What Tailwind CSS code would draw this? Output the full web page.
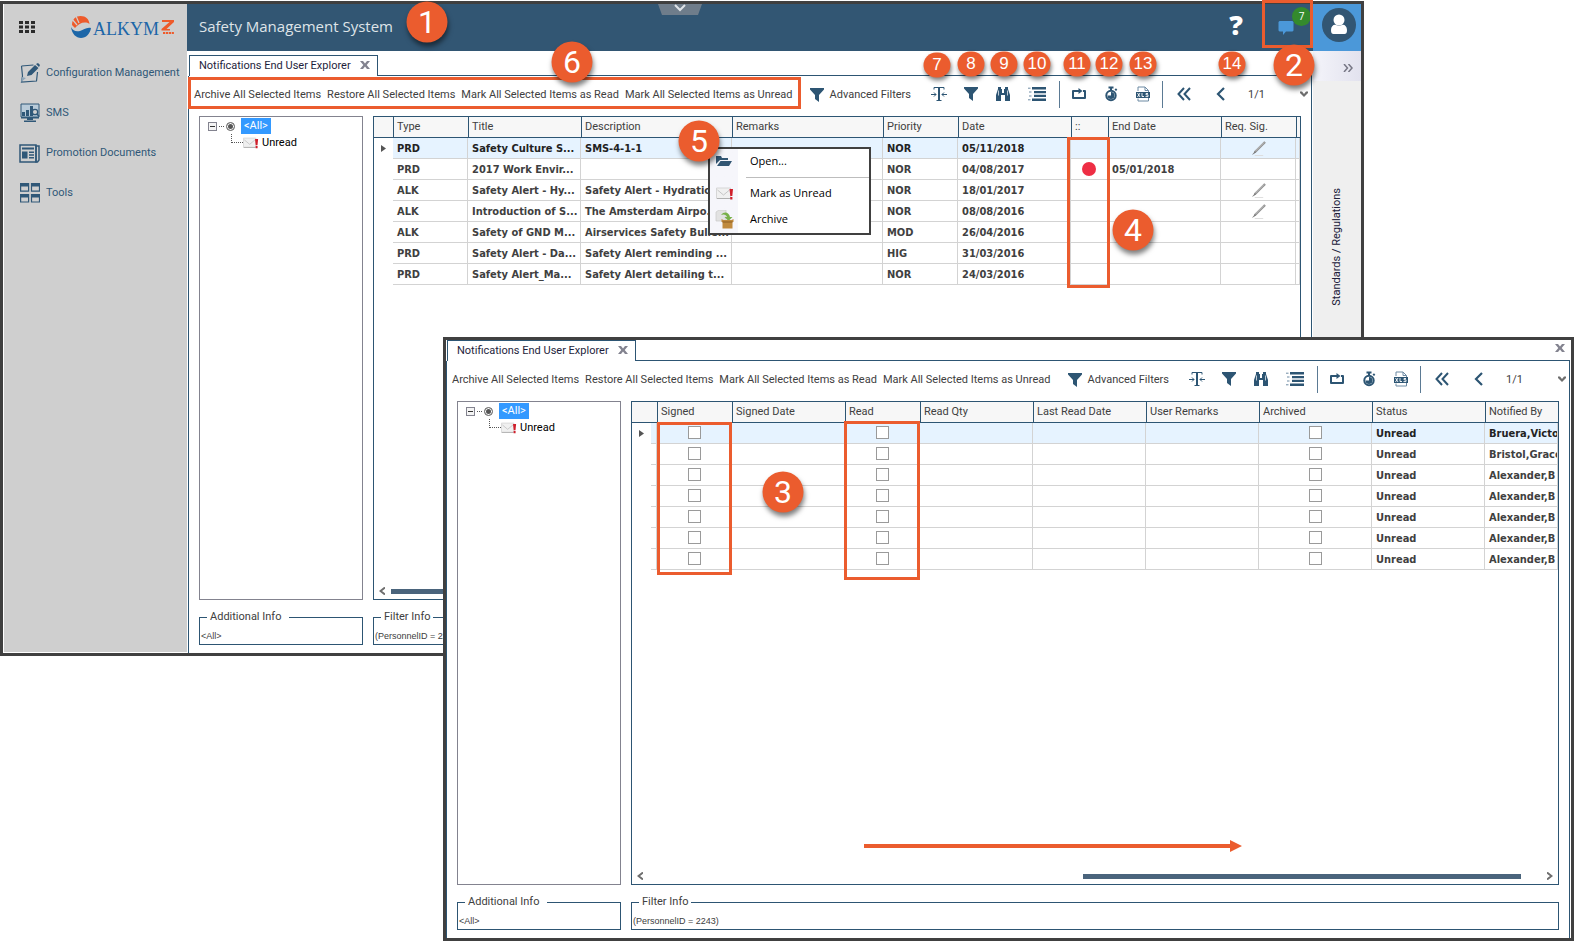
<!DOCTYPE html>
<html lang="en">
<head>
    <meta charset="UTF-8">
    <meta name="viewport" content="width=device-width, initial-scale=1.0">
    <title>Safety Management System</title>
    <script src="https://cdn.jsdelivr.net/npm/@tailwindcss/browser@4"></script>
    <style>
        body { font-family: Roboto, 'Noto Sans', sans-serif; }
    </style>
</head>
<body class="relative min-h-screen overflow-hidden bg-white text-[11px] leading-4 text-[#404040]">

    <!-- Shared icons -->
    <svg class="hidden">
        <symbol id="i-funnel" viewBox="0 0 14 14"><path d="M0 0h14v1.500L9 7v7l-4-3V7L0 1.500z" fill="currentColor"/></symbol>
        <symbol id="i-fit" viewBox="0 0 16 16"><path d="M3 3.500V1.500h3M10 1.500h3v2M5.500 14.500h5M0 8.500h5M3 6.500l2 2-2 2M16 8.500h-5M13 6.500l-2 2 2 2" fill="none" stroke="currentColor" stroke-width="1"/><path d="M6 1h4v1H9v12H7V2H6z" fill="currentColor"/></symbol>
        <symbol id="i-find" viewBox="0 0 16 16"><path d="M3 1h3v2h1v4h2V3h1V1h3v2l2 6v6h-5V9H6v6H1V9l2-6z" fill="currentColor"/><path d="M3.500 4.500v5M12.500 4.500v5" stroke="#fff" stroke-width="0.700" fill="none"/></symbol>
        <symbol id="i-list" viewBox="0 0 18 14"><path d="M4 0h14v2.500H4zM6 4h12v2.300H6zM6 7.700h12V10H6zM4 11.500h14V14H4z" fill="currentColor"/><path d="M0 1.200h2.500M1 5h2.500M1 9h2.500M0 12.800h2.500" stroke="#6d8aa3"/></symbol>
        <symbol id="i-refresh" viewBox="0 0 16 16"><path d="M5.500 5H2v7h12V5h-2" fill="none" stroke="currentColor" stroke-width="2" stroke-linejoin="round"/><path d="M5 5h3" stroke="currentColor" stroke-width="2"/><path d="M7.500 2l4 3-4 3z" fill="currentColor"/></symbol>
        <symbol id="i-timer" viewBox="0 0 16 16"><circle cx="8" cy="9.500" r="4.700" fill="none" stroke="currentColor" stroke-width="2"/><path d="M5.500.500h5v2h-5zM7 2h2v3H7zM11.500 3.500l1.500-1.200 1.300 1.500-1.300 1.200zM8 9.500V6a3.500 3.500 0 1 1-3.500 3.500z" fill="currentColor"/></symbol>
        <symbol id="i-xls" viewBox="0 0 16 16"><path d="M3 5V1h7l3.500 3.500V15H3v-2.500M10 1v3.500h3.500" fill="none" stroke="#6d8aa3"/><path d="M1 6h14v6H1z" fill="currentColor"/><path d="M2.500 7l2.500 4M5 7l-2.500 4M7 7v3.500h2M13 7.500h-2v1.300h2v1.800h-2.500" fill="none" stroke="#fff" stroke-width=".9"/></symbol>
        <symbol id="i-first" viewBox="0 0 16 16"><path d="M8 2L2.500 8 8 14M14 2L8.500 8l5.500 6" fill="none" stroke="currentColor" stroke-width="2"/></symbol>
        <symbol id="i-prev" viewBox="0 0 16 16"><path d="M12 2L6 8l6 6" fill="none" stroke="currentColor" stroke-width="2.200"/></symbol>
        <symbol id="i-down" viewBox="0 0 8 6"><path d="M0 .500h2l2 2.500 2-2.500h2v1.500L4 6 0 2z" fill="currentColor"/></symbol>
        <symbol id="i-left" viewBox="0 0 6 8"><path d="M6 .500L1.500 4 6 7.500" fill="none" stroke="currentColor" stroke-width="2"/></symbol>
        <symbol id="i-close" viewBox="0 0 10 8"><path d="M0 0h3l2 2.500L7 0h3L6.700 4 10 8H7L5 5.500 3 8H0l3.300-4z" fill="#83838f"/></symbol>
        <symbol id="i-mail" viewBox="0 0 18 13"><path d="M.5 1h14v10.500H.5z" fill="#f0f0f0" stroke="#d6d6d6"/><path d="M1.500 3l6 5 6-5" fill="none" stroke="#c6c6c6"/><path d="M1 11.500h13" stroke="#b0b0b0"/><path d="M13.500 2h3.500l-.7 7h-2zM14.200 10h2.200v2.500h-2.200z" fill="#d01f2b"/></symbol>
        <symbol id="i-pen" viewBox="0 0 16 16"><path d="M15 1L4 12" stroke="#8f8f8f" stroke-width="2.400"/><path d="M14 1.500L4 11.500" stroke="#d4d4d4" stroke-width=".8"/><path d="M4.500 10.500L1 15l4-2.500z" fill="#777"/><path d="M4 15.500h9" stroke="#dcdcdc"/></symbol>
    </svg>

    <!-- Main window -->
    <div class="absolute top-px left-0 right-[211px] flex h-[655px] border-[3px] border-[#404040] bg-white">

        <aside class="mb-px ml-px w-[183px] shrink-0 bg-[#cfcfcf] text-[#305878]">
            <div class="flex h-[45px] items-center pl-[15px]">
                <button aria-label="Applications" class="text-[#2b2b2b]">
                    <svg class="h-3 w-4" viewBox="0 0 16 12" fill="currentColor"><path d="M0 0h4v3H0zM6 0h4v3H6zM12 0h4v3h-4zM0 4.500h4v3H0zM6 4.500h4v3H6zM12 4.500h4v3h-4zM0 9h4v3H0zM6 9h4v3H6zM12 9h4v3h-4z"/></svg>
                </button>
                <a href="#" class="ml-9 flex items-center font-['Liberation_Serif'] text-[18px] leading-5 text-[#1c66a8]">
                    <svg class="h-[22px] w-5" viewBox="0 0 20 22"><path d="M1 9C1 3 5 0 9.500 0 15 0 18 3 18.500 8 14 5 8 7 4 12z" fill="#ee5b2b"/><path d="M1 3l5 6M5 0l3 7" stroke="#cfcfcf" stroke-width="1.200"/><path d="M0 11c2 4 5 5 9 4 4-1 6-4 11-3-1 6-5 10-10 10S1 18 0 11z" fill="#1c66a8"/><path d="M8 12c4-3 7-4 11.500-2" stroke="#cfcfcf" stroke-width="1.500" fill="none"/></svg>
                    <span class="mt-1 ml-[2px]">ALKYM</span>
                    <svg class="ml-[2px] h-4 w-[14px]" viewBox="0 0 14 16"><path d="M1 1h12v2L5.500 10H9v1.500H.5V10L8.500 3H1z" fill="#ee5b2b"/><path d="M2 14h11.500" stroke="#ee5b2b" stroke-width="2" stroke-dasharray="2.200 .7"/></svg>
                </a>
            </div>
            <nav class="pt-1">
                <a href="#" class="flex h-10 items-center gap-[6px] pl-4">
                    <svg class="h-5 w-5" viewBox="0 0 20 20"><path d="M1.500 3l12-1M1.500 3l1 10-1 6 15-1 1-9" fill="none" stroke="currentColor" stroke-width="1.200"/><path d="M1 19l5-4-4-1z" fill="#8ea5b8"/><path d="M7 13l1-4 7-7 3.500 3-7 7zM16 1l2-1 2 2-1 2z" fill="currentColor"/></svg>
                    Configuration Management
                </a>
                <a href="#" class="flex h-10 items-center gap-[6px] pl-4">
                    <svg class="h-5 w-5" viewBox="0 0 20 20"><path d="M1 1h18v13H1z" fill="#b9cbd9" stroke="currentColor"/><path d="M2 9h3v4H2zM6 7h3v6H6zM10 3h3v10h-3zM1 14h18v1.500H1zM7 15h6v2H7zM4 17.500h12V19H4z" fill="currentColor"/><circle cx="15" cy="9" r="2.700" fill="#cfcfcf" stroke="currentColor" stroke-width="1.300"/><path d="M17 11l2 2.500" stroke="currentColor" stroke-width="1.500"/></svg>
                    SMS
                </a>
                <a href="#" class="flex h-10 items-center gap-[6px] pl-[15px]">
                    <svg class="h-[19px] w-[21px]" viewBox="0 0 21 19"><path d="M1 1h16v17H1z" fill="none" stroke="currentColor" stroke-width="1.500"/><path d="M17 2h3v14l-1.500 2H17z" fill="none" stroke="currentColor" stroke-width="1.500"/><path d="M3 3.500h12v2H3zM3 7.500h5.500v7H3zM10 7.500h5V9h-5zM10 10.300h5v1.500h-5zM10 13h5v1.500h-5z" fill="currentColor"/></svg>
                    Promotion Documents
                </a>
                <a href="#" class="flex h-10 items-center gap-[6px] pl-4">
                    <svg class="h-5 w-5" viewBox="0 0 20 20"><path d="M.6.600h8v7.500h-8zM11.500.600h8v7.500h-8zM.6 11.500h8V19h-8zM11.500 11.500h8V19h-8z" fill="none" stroke="currentColor" stroke-width="1.200"/><path d="M0 0h9v3.500H0zM11 0h9v3.500h-9zM0 11h9v3.500H0zM11 11h9v3.500h-9z" fill="currentColor"/></svg>
                    Tools
                </a>
            </nav>
        </aside>

        <div class="flex min-w-0 flex-1 flex-col">
            <header class="relative flex h-[47px] shrink-0 items-center bg-[#325673] pl-3">
                <h1 class="pb-1 font-['Open_Sans'] text-[15px] text-[#dfe4e8]">Safety Management System</h1>
                <button aria-label="Collapse header" class="absolute top-0 left-[471px]">
                    <svg class="block h-[11px] w-11" viewBox="0 0 44 11"><path d="M0 0h44l-4 11H4z" fill="#6f7d8b"/><path d="M17 1l5 5 5-5" fill="none" stroke="#dfe4e8" stroke-width="2"/></svg>
                </button>
                <div class="ml-auto flex h-full items-center">
                    <button aria-label="Help" class="w-6 pb-[6px] font-['Open_Sans'] text-[27px] leading-8 font-extrabold text-white">?</button>
                    <button class="relative ml-[30px] h-8 w-[33px]">
                        <svg class="h-4 w-4" viewBox="0 0 16 16"><path d="M1.500 1h13l1 1v8.500l-1 1H8L5 15v-3.500H1.500l-1-1V2z" fill="#4b98d9"/></svg>
                        <span class="absolute -top-[5px] right-0 size-[19px] rounded-full bg-[#348a2d] text-center font-['Open_Sans'] text-[10px] leading-[19px] text-white">7</span>
                    </button>
                    <button aria-label="User" class="ml-[2px] flex h-full w-12 justify-center bg-[#4b98d9] pt-1 pl-[3px]">
                        <svg class="size-[34px]" viewBox="0 0 34 34"><circle cx="17" cy="17" r="17" fill="#325673"/><circle cx="17" cy="12" r="5.500" fill="#fff"/><path d="M9 22c0-4 3-6 5-5 2 1 4 1 6 0 2-1 5 1 5 5 0 3-1 4-2.500 4h-11C10 26 9 25 9 22z" fill="#fff"/></svg>
                    </button>
                </div>
            </header>

            <div class="flex min-h-0 flex-1">
                <section data-grid="first" class="workspace ml-px flex min-w-0 flex-1 flex-col pt-1"></section>
                <aside class="mb-px ml-px flex w-12 flex-col bg-[#efefef] text-[#20203a]">
                    <button aria-label="Expand panel" class="flex h-[30px] items-center justify-end bg-linear-to-r from-[#f4f4fa] to-[#e2e2ee] pt-1 pr-2">
                        <svg class="h-2 w-[10px]" viewBox="0 0 10 8"><path d="M1 0l3.500 4L1 8M5.500 0L9 4 5.500 8" fill="none" stroke="#777785" stroke-width="1.500"/></svg>
                    </button>
                    <span class="mt-[104px] h-[124px] self-center text-center whitespace-nowrap [writing-mode:sideways-lr]">Standards / Regulations</span>
                </aside>
            </div>
        </div>
    </div>

    <!-- Context menu -->
    <ul role="menu" class="absolute top-[147px] left-[708px] h-[88px] w-[163px] border-2 border-[#404040] bg-linear-to-r from-[#f6f6fb] from-[28px] to-white to-[28px] font-['Open_Sans'] text-black">
        <li class="flex h-6 items-center">
            <svg class="ml-[6px] h-3 w-4" viewBox="0 0 16 12"><path d="M0 9V1h5l1 2h6v2H4z" fill="#325673"/><path d="M4.500 6H16l-3 5H1z" fill="#325673"/></svg>
            <button class="ml-[18px]">Open...</button>
        </li>
        <li class="mt-1 mb-[2px] ml-9 border-t border-[#bdbdbd]"></li>
        <li class="flex h-[26px] items-center">
            <svg class="ml-[6px] h-[13px] w-[18px]"><use href="#i-mail"/></svg>
            <button class="ml-4">Mark as Unread</button>
        </li>
        <li class="flex h-[26px] items-center">
            <svg class="ml-[5px] h-[19px] w-[19px]" viewBox="0 0 19 19"><path d="M1 2l3-2h7v11H1z" fill="#e2e2e2" stroke="#c8c8c8" stroke-width=".7"/><path d="M6 5c3-4 8-3 9 2h2.500l-4 4-4-4H12C11 4 8 4 6 5z" fill="#79b04a"/><path d="M6.500 9l2 1h8l2-1v3h-1v6.500h-10V12h-1z" fill="#c08a3e"/><path d="M7.500 12h10" stroke="#8d5f22"/></svg>
            <button class="ml-4">Archive</button>
        </li>
    </ul>

    <!-- Same explorer, scrolled to the right -->
    <div class="absolute top-[337px] right-px bottom-0 left-[443px] flex border-[3px] border-[#404040] bg-white">
        <section data-grid="second" class="workspace mr-px flex min-w-0 flex-1 flex-col"></section>
    </div>

    <!-- Callouts -->
    <div class="absolute top-[77px] left-[188px] h-8 w-[613px] border-[3px] border-[#eb5c2e]"></div>
    <div class="absolute top-[137px] left-[1067px] h-[151px] w-[43px] border-[3px] border-[#eb5c2e]"></div>
    <div class="absolute top-0 left-[1262px] h-12 w-[51px] border-[3px] border-[#eb5c2e]"></div>
    <div class="absolute top-[422px] left-[657px] h-[153px] w-[75px] border-[3px] border-[#eb5c2e]"></div>
    <div class="absolute top-[421px] left-[844px] h-[159px] w-[76px] border-[3px] border-[#eb5c2e]"></div>
    <svg class="absolute top-[840px] left-[864px] h-3 w-[378px]" viewBox="0 0 378 12"><path d="M0 4h366V0l12 6-12 6V8H0z" fill="#eb5c2e"/></svg>
    <div id="callouts"></div>

    <template id="workspace">
        <div class="flex h-[21px] shrink-0">
            <div class="ml-px flex w-[189px] items-center border-x border-t border-[#2d5573] pl-[9px] text-[#1e1e3c]">
                <span>Notifications End User Explorer</span>
                <button aria-label="Close tab" class="mr-[7px] mb-[2px] ml-auto"><svg class="block h-2 w-[10px]"><use href="#i-close"/></svg></button>
            </div>
            <div class="tab-end flex flex-1 justify-end border-b border-[#2d5573] pr-[5px]"></div>
        </div>
        <div class="flex min-h-0 flex-1 flex-col border-x border-[#2d5573] pb-2">
            <div class="flex h-10 shrink-0 items-center pb-[4px] whitespace-nowrap">
                <div class="flex gap-[6px] pt-[2px] pl-[5px]">
                    <button>Archive All Selected Items</button>
                    <button>Restore All Selected Items</button>
                    <button>Mark All Selected Items as Read</button>
                    <button>Mark All Selected Items as Unread</button>
                </div>
                <button class="mr-5 ml-auto flex items-center gap-[6px] pt-[2px]"><svg class="size-[14px] text-[#2d5573]"><use href="#i-funnel"/></svg>Advanced Filters</button>
                <div class="flex h-[27px] w-[380px] text-[#2d5573]">
                    <div class="flex items-center gap-4 pr-[13px]">
                        <button aria-label="Best fit"><svg class="size-4"><use href="#i-fit"/></svg></button>
                        <button aria-label="Filter"><svg class="mx-px size-[14px]"><use href="#i-funnel"/></svg></button>
                        <button aria-label="Find"><svg class="size-4"><use href="#i-find"/></svg></button>
                        <button aria-label="Group" class="pl-px"><svg class="h-[14px] w-[18px]"><use href="#i-list"/></svg></button>
                    </div>
                    <div class="flex items-center gap-4 border-l border-[#5b7a94] pr-[11px] pl-[11px]">
                        <button aria-label="Refresh"><svg class="size-4"><use href="#i-refresh"/></svg></button>
                        <button aria-label="Auto refresh"><svg class="size-4"><use href="#i-timer"/></svg></button>
                        <button aria-label="Export to XLS"><svg class="size-4"><use href="#i-xls"/></svg></button>
                    </div>
                    <div class="flex flex-1 items-center gap-5 border-l border-[#5b7a94] pl-[13px]">
                        <button aria-label="First page"><svg class="size-4"><use href="#i-first"/></svg></button>
                        <button aria-label="Previous page"><svg class="size-4"><use href="#i-prev"/></svg></button>
                        <span class="pt-[2px] text-[#404040]">1/1</span>
                        <button aria-label="More" class="mr-[3px] ml-auto text-[#6e6e6e]"><svg class="h-[6px] w-2"><use href="#i-down"/></svg></button>
                    </div>
                </div>
            </div>
            <div class="flex min-h-0 flex-1 gap-[10px] px-[10px]">
                <div class="flex w-[164px] shrink-0 flex-col">
                    <div class="flex-1 border border-[#83838f] pt-[1px] pl-2">
                        <div class="flex h-4 items-center">
                            <button aria-label="Collapse" class="grid size-[9px] place-items-center border border-[#83838f] bg-[#f4f4f4]"><span class="h-px w-[5px] bg-[#333]"></span></button>
                            <span class="mx-[2px] w-[5px] border-t border-dotted border-[#555]"></span>
                            <label class="flex items-center gap-[6px]">
                                <input type="radio" checked class="size-[9px] appearance-none rounded-full border border-[#777] bg-[#555] shadow-[inset_0_0_0_1px_#fff]">
                                <span class="bg-[#3399ff] px-[3px] text-white">&lt;All&gt;</span>
                            </label>
                        </div>
                        <div class="flex h-[18px] items-center pl-[23px] text-black">
                            <span class="mb-[9px] h-[9px] w-3 border-b border-l border-dotted border-[#555]"></span>
                            <svg class="h-3 w-4"><use href="#i-mail"/></svg>
                            <span class="ml-[3px]">Unread</span>
                        </div>
                    </div>
                    <fieldset class="mt-[9px] h-9 border border-[#2d5573]">
                        <legend class="ml-[7px] pr-2 pl-[3px]">Additional Info</legend>
                        <p class="pl-px font-['Liberation_Sans'] text-[9px] leading-[22px]">&lt;All&gt;</p>
                    </fieldset>
                </div>
                <div class="flex min-w-0 flex-1 flex-col">
                    <div class="flex min-h-0 flex-1 flex-col overflow-hidden border border-[#2d5573]">
                        <table class="w-full table-fixed border-separate border-spacing-0 bg-white whitespace-nowrap"></table>
                        <div class="mt-auto flex h-4 items-center justify-between px-[5px] text-[#6e6e6e]">
                            <button aria-label="Scroll left"><svg class="block h-2 w-[6px]"><use href="#i-left"/></svg></button>
                            <span class="thumb h-[5px] w-[438px] bg-[#4a647c]"></span>
                            <button aria-label="Scroll right"><svg class="block h-2 w-[6px] rotate-180"><use href="#i-left"/></svg></button>
                        </div>
                    </div>
                    <fieldset class="mt-[9px] h-9 border border-[#2d5573]">
                        <legend class="ml-[7px] px-[3px]">Filter Info</legend>
                        <p class="pl-px font-['Liberation_Sans'] text-[9px] leading-[22px]">(PersonnelID = 2243)</p>
                    </fieldset>
                </div>
            </div>
        </div>
    </template>

    <script>
        const DOT = '<span class="mx-auto block size-[14px] rounded-full bg-[#ee2e44]"></span>';
        const PEN = '<svg class="mx-auto block size-[15px]"><use href="#i-pen"/></svg>';
        const BOX = '<input type="checkbox" aria-label="flag" class="mx-auto mb-[2px] block size-[13px] appearance-none border border-[#9a9a9a] bg-white">';

        const grids = {
            first: {
                columns: [['Type', 75], ['Title', 113], ['Description', 151], ['Remarks', 151], ['Priority', 75], ['Date', 113], ['::', 37], ['End Date', 113], ['Req. Sig.', 75], ['', 0]],
                rows: [
                    ['PRD', 'Safety Culture S...', 'SMS-4-1-1', '', 'NOR', '05/11/2018', '', '', PEN, ''],
                    ['PRD', '2017 Work Envir...', '', '', 'NOR', '04/08/2017', DOT, '05/01/2018', '', ''],
                    ['ALK', 'Safety Alert - Hy...', 'Safety Alert - Hydratio...', '', 'NOR', '18/01/2017', '', '', PEN, ''],
                    ['ALK', 'Introduction of S...', 'The Amsterdam Airpo...', '', 'NOR', '08/08/2016', '', '', PEN, ''],
                    ['ALK', 'Safety of GND M...', 'Airservices Safety Bulle...', '', 'MOD', '26/04/2016', '', '', '', ''],
                    ['PRD', 'Safety Alert - Da...', 'Safety Alert reminding ...', '', 'HIG', '31/03/2016', '', '', '', ''],
                    ['PRD', 'Safety Alert_Ma...', 'Safety Alert detailing t...', '', 'NOR', '24/03/2016', '', '', '', '']
                ]
            },
            second: {
                columns: [['', 6], ['Signed', 75], ['Signed Date', 113], ['Read', 75], ['Read Qty', 113], ['Last Read Date', 113], ['User Remarks', 113], ['Archived', 113], ['Status', 113], ['Notified By', 0]],
                rows: ['Bruera,Victo', 'Bristol,Grace', 'Alexander,B', 'Alexander,B', 'Alexander,B', 'Alexander,B', 'Alexander,B']
                    .map(name => ['', BOX, '', BOX, '', '', '', BOX, 'Unread', name])
            }
        };

        document.querySelectorAll('.workspace').forEach(section => {
            section.append(document.getElementById('workspace').content.cloneNode(true));
            const { columns, rows } = grids[section.dataset.grid];

            const cols = [['', 19], ...columns].map(([, w]) => w ? `<col style="width:${w}px">` : '<col>').join('');
            const head = columns.map(([label, w]) =>
                `<th class="overflow-hidden border-b border-[#2d5573] bg-[#f7f7f7] pl-[3px] text-left font-normal ${w === 6 ? '' : 'border-l'}">${label}</th>`).join('');
            const body = rows.map((row, i) => {
                const marker = i === 0 ? '<svg class="ml-[7px] h-[7px] w-[5px]" viewBox="0 0 5 7"><path d="M0 0l5 3.500L0 7z" fill="#555"/></svg>' : '';
                const cells = row.map(cell => {
                    const pad = cell.startsWith('<') ? 'p-0' : 'pt-[2px] pb-0 pl-1';
                    return `<td class="overflow-hidden border-r border-b border-[#d3d3d3] ${pad}">${cell}</td>`;
                }).join('');
                return `<tr class="h-[21px] ${i === 0 ? 'bg-[#e6f3ff] text-[#222]' : ''}"><td class="bg-white p-0">${marker}</td>${cells}</tr>`;
            }).join('');

            section.querySelector('table').innerHTML =
                `<colgroup>${cols}</colgroup><thead><tr class="h-[21px]"><th class="border-b border-[#2d5573] bg-[#f7f7f7]"></th>${head}</tr></thead>` +
                `<tbody class="font-['DejaVu_Sans_Condensed'] font-bold">${body}</tbody>`;

            if (section.dataset.grid === 'second') {
                section.querySelector('.thumb').classList.add('ml-auto', 'mr-[26px]');
                section.querySelector('.tab-end').innerHTML = '<button aria-label="Close window" class="mt-[4px] self-start"><svg class="block h-2 w-[10px]"><use href="#i-close"/></svg></button>';
            } else {
                section.querySelector('.thumb').classList.add('mr-auto', 'ml-[6px]');
            }
        });

        // number, centre x, centre y
        const big = [[1, 427, 22], [6, 572, 62], [5, 699, 141], [4, 1133, 230], [2, 1294, 65], [3, 783, 492]];
        const small = [[7, 937, 65], [8, 971, 64], [9, 1004, 64], [10, 1037, 64], [11, 1077, 64], [12, 1109, 64], [13, 1143, 64], [14, 1232, 64]];
        const callouts = document.getElementById('callouts');
        big.forEach(([n, x, y]) => callouts.insertAdjacentHTML('beforeend',
            `<span style="left:${x}px;top:${y}px" class="absolute size-[41px] -translate-1/2 rounded-full bg-[#eb5c2e] text-center font-['Roboto'] text-[32px] leading-[40px] text-white shadow-[1px_4px_5px_rgba(0,0,0,0.5)]">${n}</span>`));
        small.forEach(([n, x, y]) => callouts.insertAdjacentHTML('beforeend',
            `<span style="left:${x}px;top:${y}px" class="absolute h-[25px] w-[27px] -translate-1/2 rounded-full bg-[#eb5c2e] text-center font-['Liberation_Sans'] text-[17px] leading-6 text-white shadow-[1px_3px_4px_rgba(0,0,0,0.5)]">${n}</span>`));
    </script>
</body>
</html>
